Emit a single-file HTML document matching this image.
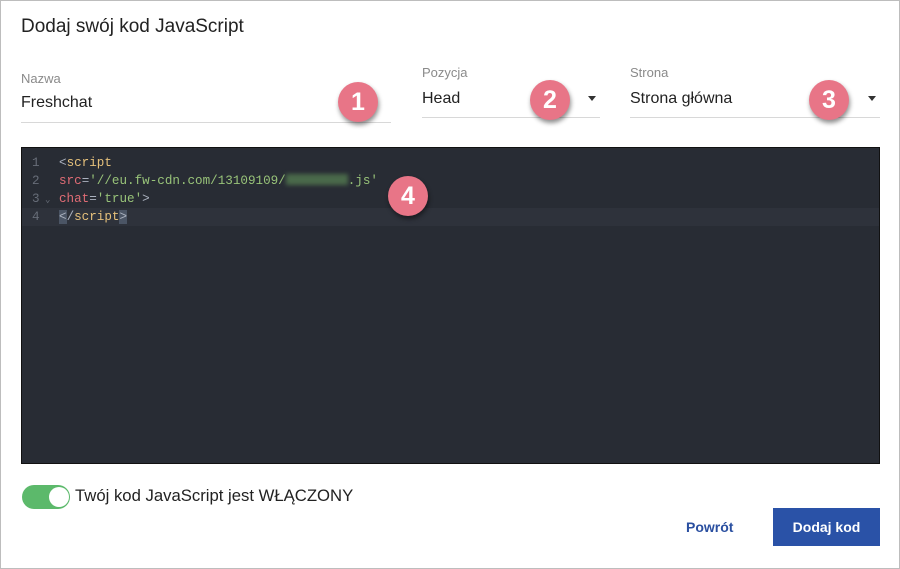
<!DOCTYPE html>
<html><head><style>
*{box-sizing:border-box;margin:0;padding:0}
body{width:900px;height:569px;background:#fff;font-family:"Liberation Sans",sans-serif;position:relative;overflow:hidden}
.frame{position:absolute;left:0;top:0;width:900px;height:569px;border:1px solid #bdbdbd}
.t{position:absolute;white-space:nowrap}
.lab{color:#8a8a8a;font-size:13px}
.val{color:#222;font-size:16px}
.line{position:absolute;height:1px;background:#d8d8d8}
.arr{position:absolute;width:0;height:0;border-left:4px solid transparent;border-right:4px solid transparent;border-top:5px solid #333}
.badge{position:absolute;width:40px;height:40px;border-radius:50%;background:#e87587;color:#fff;font-size:25px;font-weight:bold;text-align:center;line-height:40px;box-shadow:1px 3px 5px rgba(0,0,0,.45)}
.ed{position:absolute;left:21px;top:147px;width:859px;height:317px;background:#282c34;border:1px solid #111}
.code{font-family:"Liberation Mono",monospace;font-size:12.6px;position:absolute;left:0;width:100%;height:18px;line-height:18px}
.ln{position:absolute;left:10px;color:#676d78}
.c{position:absolute;left:37px}
</style></head><body>
<div class="frame"></div>
<div class="t" style="left:21px;top:16px;font-size:19px;color:#222">Dodaj swój kod JavaScript</div>
<div class="t lab" style="left:21px;top:71px">Nazwa</div>
<div class="t val" style="left:21px;top:94px">Freshchat</div>
<div class="line" style="left:21px;top:122px;width:370px"></div>
<div class="t lab" style="left:422px;top:65px">Pozycja</div>
<div class="t val" style="left:422px;top:90px">Head</div>
<div class="line" style="left:422px;top:117px;width:178px"></div>
<div class="arr" style="left:588px;top:96px"></div>
<div class="t lab" style="left:630px;top:65px">Strona</div>
<div class="t val" style="left:630px;top:90px">Strona główna</div>
<div class="line" style="left:630px;top:117px;width:250px"></div>
<div class="arr" style="left:868px;top:96px"></div>
<div class="ed">
<div class="code" style="top:60px;background:#2e323b"></div>
<div class="code" style="top:6px"><span class="ln">1</span><span class="c" style="color:#abb2bf">&lt;<span style="color:#e5c07b">script</span></span></div>
<div class="code" style="top:24px"><span class="ln">2</span><span class="c"><span style="color:#e06c75">src</span><span style="color:#abb2bf">=</span><span style="color:#98c379">'//eu.fw-cdn.com/13109109/<span style="display:inline-block;width:62px;height:11px;background:#4a6a4a;filter:blur(2px);vertical-align:-1px"></span>.js'</span></span></div>
<div class="code" style="top:42px"><span class="ln">3<span style="font-size:9px"> ⌄</span></span><span class="c"><span style="color:#e06c75">chat</span><span style="color:#abb2bf">=</span><span style="color:#98c379">'true'</span><span style="color:#abb2bf">&gt;</span></span></div>
<div class="code" style="top:60px"><span class="ln">4</span><span class="c" style="color:#abb2bf"><span style="background:#4b5565">&lt;</span>/<span style="color:#e5c07b">script</span><span style="background:#4b5565">&gt;</span></span></div>
</div>
<div class="badge" style="left:338px;top:82px">1</div>
<div class="badge" style="left:530px;top:80px">2</div>
<div class="badge" style="left:809px;top:80px">3</div>
<div class="badge" style="left:388px;top:176px">4</div>
<div style="position:absolute;left:22px;top:485px;width:48px;height:24px;border-radius:12px;background:#5cb96b"></div>
<div style="position:absolute;left:49px;top:487px;width:20px;height:20px;border-radius:50%;background:#fff"></div>
<div class="t" style="left:75px;top:486px;font-size:16.7px;color:#222">Twój kod JavaScript jest WŁĄCZONY</div>
<div class="t" style="left:686px;top:519px;font-size:14px;font-weight:bold;color:#2a4fa0">Powrót</div>
<div style="position:absolute;left:773px;top:508px;width:107px;height:38px;background:#2a52a7;color:#fff;font-size:14px;font-weight:bold;text-align:center;line-height:38px">Dodaj kod</div>
</body></html>
